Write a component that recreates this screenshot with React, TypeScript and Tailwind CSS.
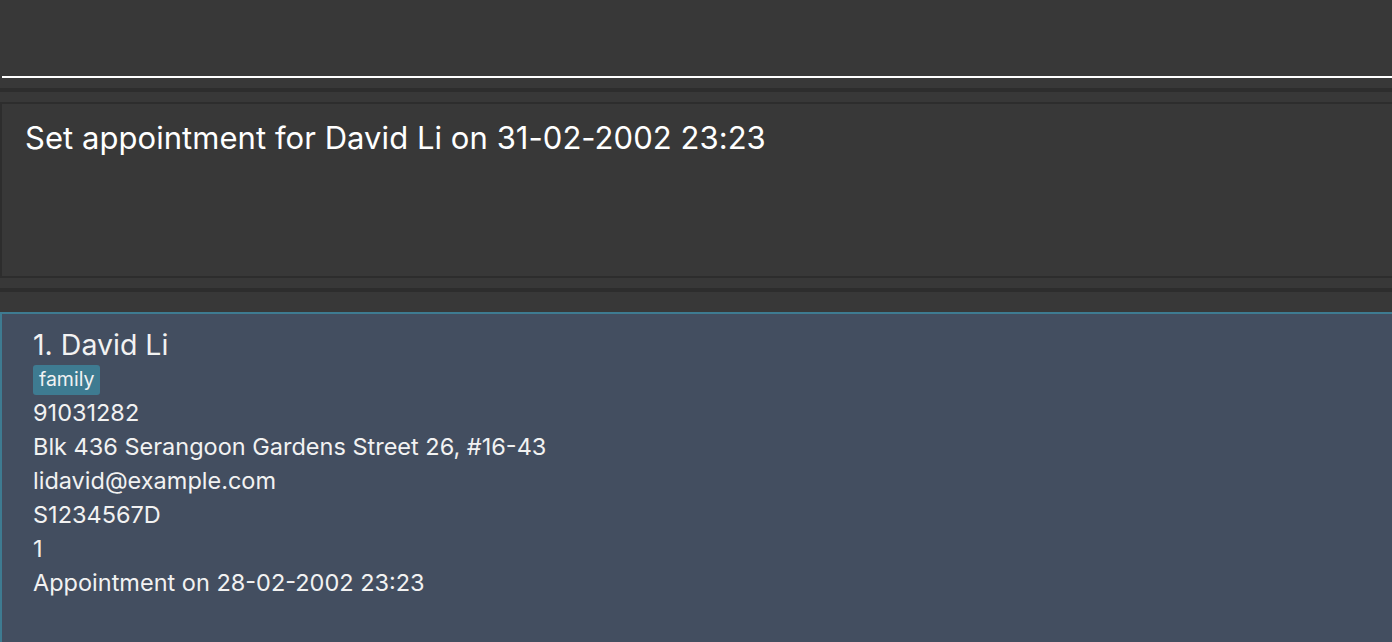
import React from "react"

interface Person {
    index: number
    name: string
    tags: string[]
    fields: string[]
}

const person: Person = {
    index: 1,
    name: "David Li",
    tags: ["family"],
    fields: [
        "91031282",
        "Blk 436 Serangoon Gardens Street 26, #16-43",
        "lidavid@example.com",
        "S1234567D",
        "1",
        "Appointment on 28-02-2002 23:23",
    ],
}

const App = () => {
    return (
        <div className="h-screen w-full overflow-hidden bg-[#383838] flex flex-col font-['Inter',sans-serif]">
            {/* command box */}
            <div className="h-[76px] shrink-0" />
            <div className="h-[2px] ml-[2px] bg-white shrink-0" />
            <div className="h-[10px] shrink-0" />
            <div className="h-[4px] bg-[#2d2d2d] shrink-0" />
            <div className="h-[10px] shrink-0" />

            {/* result display */}
            <div className="h-[176px] shrink-0 border-t-2 border-l-2 border-b-2 border-[#2d2d2d] px-[23px] pt-[14px]">
                <div className="text-[31px] text-white leading-[40px] tracking-[0.05px]">
                    Set appointment for David Li on 31-02-2002 23:23
                </div>
            </div>

            <div className="h-[10px] shrink-0" />
            <div className="h-[4px] bg-[#2d2d2d] shrink-0" />
            <div className="h-[20px] shrink-0" />

            {/* person list */}
            <div className="flex-1 bg-[#434e60] border-t-2 border-l-2 border-[#3e7b91] pl-[31px] pt-[14px]">
                <div className="text-[28.5px] text-[#f2f2f2] leading-[34px]">
                    {person.index}. {person.name}
                </div>
                <div className="flex flex-row gap-2 mt-[3px] mb-[1px]">
                    {person.tags.map((tag) => (
                        <div key={tag} className="bg-[#3e7b91] rounded-[3px] px-[6px] h-[30px] flex items-center text-[19.5px] text-[#f2f2f2]">
                            {tag}
                        </div>
                    ))}
                </div>
                <div className="flex flex-col">
                    {person.fields.map((field, i) => (
                        <div key={i} className="text-[23.5px] text-[#f2f2f2] leading-[34px]">
                            {field}
                        </div>
                    ))}
                </div>
            </div>
        </div>
    )
}

export default App
